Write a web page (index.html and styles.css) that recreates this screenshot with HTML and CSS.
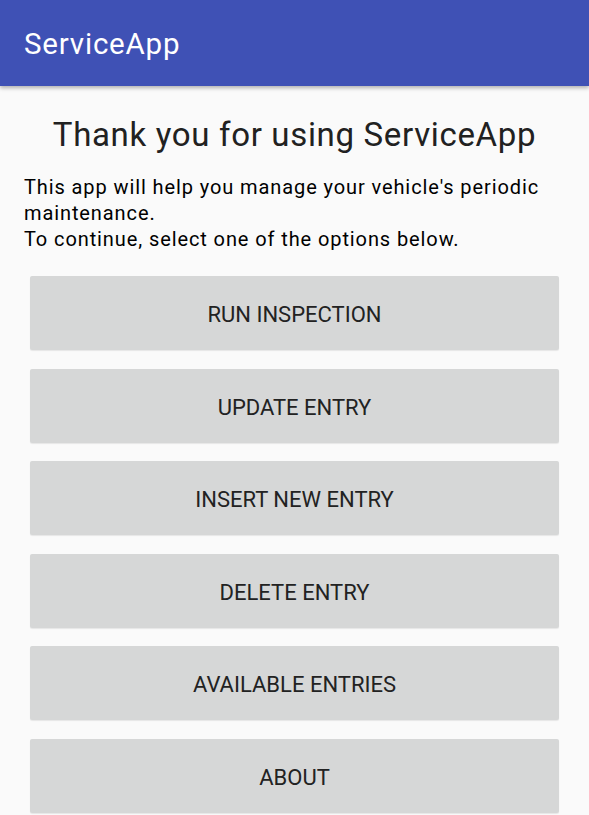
FILE: index.html
```html
<!DOCTYPE html>
<html>
<head>
<meta charset="utf-8">
<link rel="stylesheet" href="styles.css">
</head>
<body>
<header class="appbar"><span class="appbar-title">ServiceApp</span></header>
<main class="content">
  <h1 class="heading">Thank you for using ServiceApp</h1>
  <p class="intro">This app will help you manage your vehicle's periodic maintenance.<br>To continue, select one of the options below.</p>
  <div class="buttons">
    <button class="btn">Run Inspection</button>
    <button class="btn">Update Entry</button>
    <button class="btn">Insert New Entry</button>
    <button class="btn">Delete Entry</button>
    <button class="btn">Available Entries</button>
    <button class="btn">About</button>
  </div>
</main>
</body>
</html>
```
FILE: styles.css
```css
html, body {
  margin: 0;
  padding: 0;
}
body {
  background: #fafafa;
  font-family: Roboto, "Noto Sans", sans-serif;
  width: 589px;
  height: 815px;
  overflow: hidden;
}
.appbar {
  height: 86px;
  background: #3f51b5;
  display: flex;
  align-items: center;
  padding-left: 24px;
  box-shadow: 0 2px 4px rgba(0,0,0,0.3);
  position: relative;
  z-index: 1;
}
.appbar-title {
  color: #fff;
  font-size: 29.5px;
  letter-spacing: 0.8px;
  margin-top: 2px;
}
.content {
  padding: 29px 24px 0;
}
.heading {
  margin: 0;
  font-weight: 400;
  font-size: 33px;
  line-height: 40px;
  letter-spacing: 0.67px;
  text-align: center;
  color: #212121;
}
.intro {
  margin: 19px 0 0;
  font-size: 20px;
  line-height: 26px;
  letter-spacing: 0.9px;
  color: #000;
}
.buttons {
  display: flex;
  flex-direction: column;
  gap: 18.6px;
  padding: 0 6px;
  margin-top: 24px;
}
.btn {
  height: 74px;
  border: none;
  border-radius: 2px;
  background: #d6d7d7;
  box-shadow: 0 1px 1px rgba(0,0,0,0.08);
  font-family: Roboto, "Noto Sans", sans-serif;
  font-size: 22px;
  text-transform: uppercase;
  color: #222;
  letter-spacing: 0;
  padding: 3px 0 0;
}
```
